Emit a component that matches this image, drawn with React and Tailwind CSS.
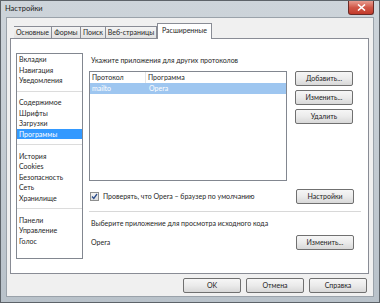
const Btn = ({ children, className = "" }) => (
  <div
    className={`flex items-center justify-center h-[15px] w-[58px] rounded-[2px] border border-[#707070] bg-gradient-to-b from-[#f6f6f6] via-[#ebebeb] to-[#d8d8d8] text-[7px] text-[#222] leading-none whitespace-nowrap ${className}`}
  >
    {children}
  </div>
);

const Item = ({ children, sel }) => (
  <div
    className={`h-[10.5px] leading-[10.5px] pl-[2px] text-[7px] whitespace-nowrap ${sel ? "bg-[#3399ff] text-white" : "text-[#262626]"}`}
  >
    {children}
  </div>
);

const Sep = () => (
  <div className="h-[11.5px] flex items-center">
    <div className="w-full h-px bg-[#dcdcdc]" />
  </div>
);

const tab = "h-[12px] border border-b-0 border-l-0 border-[#898c95] bg-gradient-to-b from-[#f4f4f4] to-[#e2e2e2] text-[7px] leading-[11px] text-center text-[#262626] whitespace-nowrap";

export default function App() {
  return (
    <div className="w-[380px] h-[303px] overflow-hidden bg-gradient-to-b from-[#cdd4da] to-[#b9c2ca] border border-[#5d6369] flex flex-col font-['Lato','Liberation_Sans',Arial,sans-serif]">
      {/* title bar */}
      <div className="h-[16px] flex items-start shrink-0">
        <div className="pl-[4px] pt-[3px] text-[7.5px] leading-[10px] text-[#1a1a1a]">Настройки</div>
        <div className="ml-auto mr-[5px] w-[26px] h-[14px] rounded-b-[3px] border border-t-0 border-[#6a2a26] bg-gradient-to-b from-[#e79c90] via-[#d05748] to-[#c23a2a] flex items-center justify-center">
          <svg width="9" height="7" viewBox="0 0 9 7">
            <path d="M1 0.5 L8 6.5 M8 0.5 L1 6.5" stroke="white" strokeWidth="1.6" />
          </svg>
        </div>
      </div>
      {/* client area */}
      <div className="ml-[5px] mr-[5px] h-[280px] bg-[#f0f0f0] border border-[#9aa2aa] flex flex-col">
        {/* tabs */}
        <div className="mt-[5px] ml-[5px] flex items-end h-[15px] pl-[2px] relative z-10">
          <div className={`w-[38px] border-l ${tab}`}>Основные</div>
          <div className={`w-[29px] ${tab}`}>Формы</div>
          <div className={`w-[25px] ${tab}`}>Поиск</div>
          <div className={`w-[51px] ${tab}`}>Веб-страницы</div>
          <div className="w-[55px] h-[16px] -mb-px border border-b-0 border-[#898c95] bg-white text-[7px] leading-[13px] text-center text-[#262626] whitespace-nowrap">Расширенные</div>
        </div>
        {/* panel */}
        <div className="ml-[3px] w-[359px] h-[236px] border border-[#898c95] bg-white flex pl-[5px] pt-[14px]">
          {/* left list */}
          <div className="w-[67px] h-[206px] border border-[#828790] flex flex-col">
            <Item>Вкладки</Item>
            <Item>Навигация</Item>
            <Item>Уведомления</Item>
            <Sep />
            <Item>Содержимое</Item>
            <Item>Шрифты</Item>
            <Item>Загрузки</Item>
            <Item sel>Программы</Item>
            <Sep />
            <Item>История</Item>
            <Item>Cookies</Item>
            <Item>Безопасность</Item>
            <Item>Сеть</Item>
            <Item>Хранилище</Item>
            <Sep />
            <Item>Панели</Item>
            <Item>Управление</Item>
            <Item>Голос</Item>
          </div>
          {/* right content */}
          <div className="ml-[6px] w-[272px] flex flex-col text-[7px] text-[#262626] whitespace-nowrap">
            <div className="h-[12px] leading-[12px] pl-[2px] mt-[1px]">Укажите приложения для других протоколов</div>
            <div className="flex mt-[5px]">
              <div className="w-[198px] h-[110px] border border-[#828790] bg-white flex flex-col">
                <div className="flex h-[11px] leading-[11px]">
                  <div className="w-[56px] pl-[2px] border-r border-[#e5e5e5]">Протокол</div>
                  <div className="pl-[2px]">Программа</div>
                </div>
                <div className="flex h-[11px] leading-[11px] bg-[#9ec6f0] text-white">
                  <div className="w-[56px] pl-[2px]">mailto</div>
                  <div className="pl-[3px]">Opera</div>
                </div>
              </div>
              <div className="ml-[8px] flex flex-col gap-[4px]">
                <Btn>Добавить...</Btn>
                <Btn>Изменить...</Btn>
                <Btn>Удалить</Btn>
              </div>
            </div>
            <div className="flex items-center mt-[8px] h-[15px]">
              <div className="ml-[1px] w-[9px] h-[9px] border border-[#8e8f8f] bg-gradient-to-b from-[#f4f4f4] to-[#dedede] flex items-center justify-center">
                <svg width="7" height="7" viewBox="0 0 7 7">
                  <path d="M1 3.5 L2.8 5.5 L6 1" stroke="#2b4d8c" strokeWidth="1.3" fill="none" />
                </svg>
              </div>
              <div className="ml-[4px]">Проверять, что Opera – браузер по умолчанию</div>
              <Btn className="ml-auto mr-[7px]">Настройки</Btn>
            </div>
            <div className="mt-[7px] h-px bg-[#d8d8d8]" />
            <div className="mt-[5px] h-[12px] leading-[12px] pl-[2px]">Выберите приложение для просмотра исходного кода</div>
            <div className="flex items-center mt-[6px] h-[15px]">
              <div className="pl-[2px]">Opera</div>
              <Btn className="ml-auto mr-[7px]">Изменить...</Btn>
            </div>
          </div>
        </div>
        {/* bottom buttons */}
        <div className="flex justify-end gap-[5px] mt-[4px] mr-[6px]">
          <Btn className="w-[51px] h-[15px] border-[#3c7fb1] from-[#f2f8fc] via-[#e3f0f9] to-[#cfe3f2]">OK</Btn>
          <Btn className="w-[52px]">Отмена</Btn>
          <Btn className="w-[52px]">Справка</Btn>
        </div>
      </div>
    </div>
  );
}
